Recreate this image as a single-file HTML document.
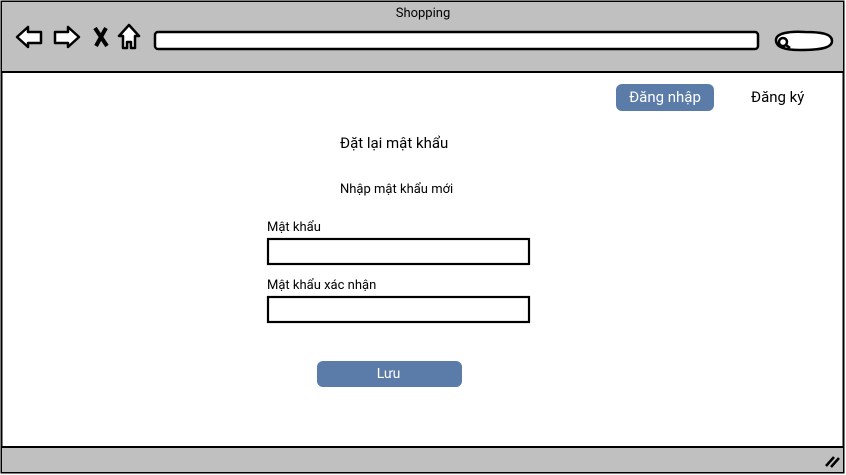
<!DOCTYPE html>
<html><head><meta charset="utf-8"><style>
body{margin:0;width:846px;height:475px;overflow:hidden;background:#fff;font-family:"Roboto","Liberation Sans",sans-serif;}
.t{position:absolute;font-size:14px;color:#000;white-space:nowrap}
</style></head><body>
<svg width="846" height="475" style="position:absolute;left:0;top:0">
<rect x="1.5" y="1.5" width="842" height="471" fill="#fff" stroke="#000" stroke-width="2"/>
<rect x="2" y="2" width="841" height="70" fill="#c0c0c0"/>
<line x1="2" y1="72" x2="843" y2="72" stroke="#000" stroke-width="2"/>
<rect x="2" y="447" width="841" height="25" fill="#c0c0c0"/>
<line x1="2" y1="447" x2="843" y2="447" stroke="#000" stroke-width="2"/>
<g stroke="#000" stroke-width="2.5" fill="#fff" stroke-linejoin="round">
<path d="M17 37 L28 27 L28 32 L41 32 L41 43 L28 43 L28 47 Z"/>
<path d="M79 37 L68 27 L68 32 L55 32 L55 43 L68 43 L68 47 Z"/>
<path d="M129 25 L119 36 L123 36 L123 48 L127 48 L127 42 L131 42 L131 48 L135 48 L135 36 L139 36 Z"/>
<rect x="155" y="32" width="603" height="17" rx="3"/>
<path d="M776 40 C776 33 790 31 805 32 C825 32 832 35 832 41 C832 48 820 50 800 50 C784 50 776 47 776 40 Z"/>
</g>
<path d="M95 28 L107 46 M106 28 L96 46" stroke="#000" stroke-width="4"/>
<circle cx="783" cy="42" r="4" fill="none" stroke="#000" stroke-width="2.5"/>
<line x1="786" y1="45" x2="790" y2="48" stroke="#000" stroke-width="2.5"/>
<path d="M826 466 L834 457 M831 467 L839 458" stroke="#000" stroke-width="2.5"/>
<rect x="616" y="84" width="98" height="27" rx="6" fill="#5b7ba8"/>
<rect x="317" y="361" width="145" height="26" rx="6" fill="#5b7ba8"/>
<g fill="#fff" stroke="#000" stroke-width="2.2">
<rect x="268" y="239" width="261" height="25"/>
<rect x="268" y="297" width="261" height="25"/>
</g>
</svg>
<div class="t" style="left:0;width:846px;text-align:center;top:6px;font-size:13px">Shopping</div>
<div class="t" style="left:616px;width:98px;text-align:center;top:88px;font-size:15px;color:#fff">Đăng nhập</div>
<div class="t" style="left:751px;top:88px;font-size:15px">Đăng ký</div>
<div class="t" style="left:340px;top:134px;font-size:15px">Đặt lại mật khẩu</div>
<div class="t" style="left:340px;top:182px;font-size:13px">Nhập mật khẩu mới</div>
<div class="t" style="left:267px;top:220px;font-size:13px">Mật khẩu</div>
<div class="t" style="left:267px;top:278px;font-size:13px">Mật khẩu xác nhận</div>
<div class="t" style="left:316px;width:145px;text-align:center;top:366px;font-size:14px;color:#fff">Lưu</div>
</body></html>
